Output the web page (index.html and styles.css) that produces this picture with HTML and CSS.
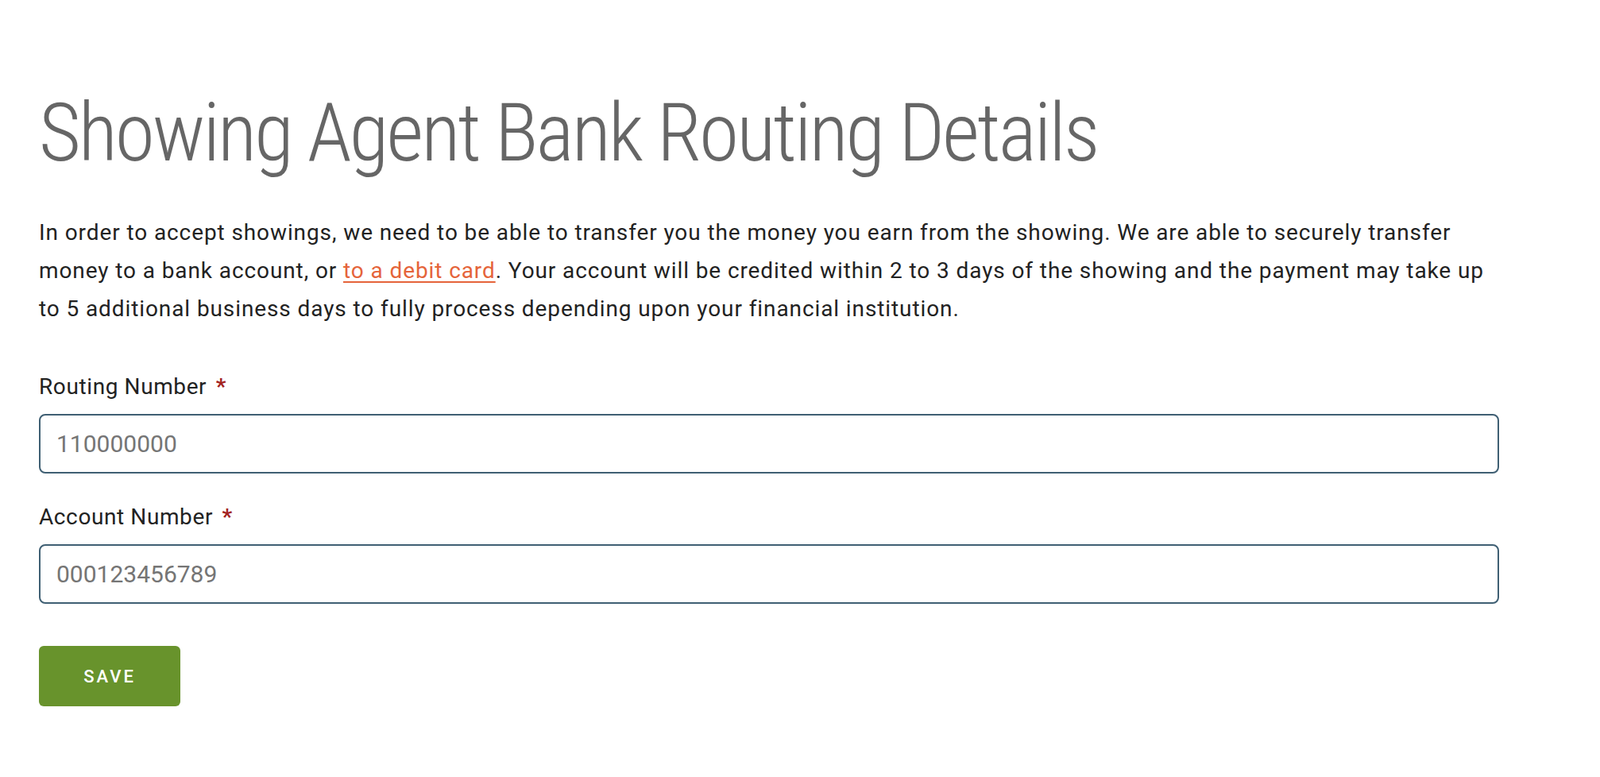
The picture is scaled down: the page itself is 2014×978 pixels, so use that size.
FILE: index.html
```html
<!DOCTYPE html>
<html lang="en">
<head>
  <meta charset="UTF-8">
  <meta name="viewport" content="width=device-width, initial-scale=1.0">
  <title>Showing Agent Bank Routing Details</title>
  <link rel="stylesheet" href="styles.css">
</head>
<body>
  <div class="page">
    <h1>Showing Agent Bank Routing Details</h1>
    <p class="intro">In order to accept showings, we need to be able to transfer you the money you earn from the showing. We are able to securely transfer money to a bank account, or <a href="#">to a debit card</a>. Your account will be credited within 2 to 3 days of the showing and the payment may take up to 5 additional business days to fully process depending upon your financial institution.</p>

    <form id="bankForm">
      <div class="form-group">
        <label for="routing">Routing Number <span class="req">*</span></label>
        <input type="text" id="routing" name="routing" placeholder="110000000">
      </div>

      <div class="form-group">
        <label for="account">Account Number <span class="req">*</span></label>
        <input type="text" id="account" name="account" placeholder="000123456789">
      </div>

      <button type="submit">Save</button>
    </form>
  </div>
</body>
</html>
```

FILE: styles.css
```css
body {
  margin: 0;
  font-family: Roboto, "Liberation Sans", sans-serif;
  color: #222;
  background: #fff;
}
.page {
  width: 1838px;
  padding: 106px 49px 0;
}
h1 {
  margin: 0 0 41px;
  font-size: 102px;
  font-weight: 300;
  font-stretch: condensed;
  letter-spacing: -3px;
  line-height: 122px;
  color: #666;
}
.intro {
  margin: 0 0 54px;
  font-size: 28px;
  letter-spacing: 0.9px;
  line-height: 48px;
}
.intro a {
  color: #e5643a;
  text-decoration-thickness: 2px;
  text-underline-offset: 4px;
}
.form-group {
  margin-bottom: 35px;
}
label {
  display: block;
  font-size: 28px;
  letter-spacing: 0.6px;
  line-height: 40px;
  margin-bottom: 14px;
}
.req {
  margin-left: 4px;
  color: #a3231f;
  font-weight: 700;
}
input {
  display: block;
  box-sizing: border-box;
  width: 100%;
  height: 75px;
  padding: 0 20px;
  border: 2px solid #3f5f73;
  border-radius: 8px;
  font-family: inherit;
  font-size: 30px;
  color: #222;
}
input::placeholder {
  color: #757575;
}
button {
  margin-top: 18px;
  width: 178px;
  height: 76px;
  background-color: #68932c;
  color: #fff;
  border: none;
  border-radius: 6px;
  font-family: inherit;
  font-size: 22px;
  font-weight: 500;
  letter-spacing: 3px;
  text-transform: uppercase;
  cursor: pointer;
}
```
